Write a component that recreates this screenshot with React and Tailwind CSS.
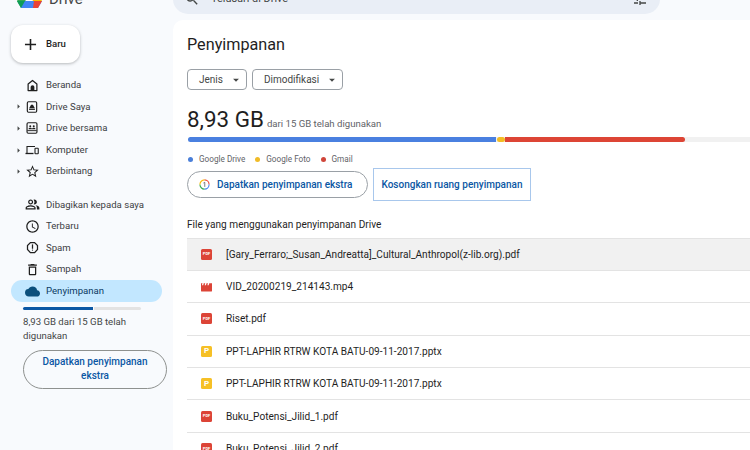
import React from "react";
import { MdAdd, MdSearch, MdTune, MdArrowDropDown, MdArrowRight, MdStarBorder, MdOutlinePeopleAlt, MdAccessTime, MdOutlineReportGmailerrorred, MdOutlineDelete, MdCloud } from "react-icons/md";

const Beranda = () => (
  <svg viewBox="0 0 24 24" className="w-[15px] h-[15px]" fill="none">
    <path d="M12 4L5 9.5V20h14V9.5L12 4z" stroke="#1f1f1f" strokeWidth="2" strokeLinejoin="round" />
    <path d="M9 20v-5.5a3 3 0 0 1 6 0V20H9z" fill="#1f1f1f" />
  </svg>
);
const DriveSaya = () => (
  <svg viewBox="0 0 24 24" className="w-[14px] h-[14px]" fill="none">
    <rect x="4" y="3" width="16" height="18" rx="2" stroke="#1f1f1f" strokeWidth="2" />
    <path d="M7 14l3.4-6h3.2l3.4 6H7z" fill="#1f1f1f" />
    <path d="M7 16h10" stroke="#1f1f1f" strokeWidth="2" />
  </svg>
);
const DriveBersama = () => (
  <svg viewBox="0 0 24 24" className="w-[14px] h-[14px]" fill="none">
    <rect x="3.5" y="3" width="17" height="18" rx="2" stroke="#1f1f1f" strokeWidth="2" />
    <circle cx="9" cy="9" r="1.7" fill="#1f1f1f" />
    <circle cx="15" cy="9" r="1.7" fill="#1f1f1f" />
    <path d="M6 14c0-2 1.5-2.6 3-2.6s3 .6 3 2.6c0-2 1.5-2.6 3-2.6s3 .6 3 2.6H6z" fill="#1f1f1f" />
    <path d="M4 16.5h16" stroke="#1f1f1f" strokeWidth="1.6" />
  </svg>
);
const Komputer = () => (
  <svg viewBox="0 0 28 20" className="w-[14px] h-[12px]" fill="none">
    <path d="M4 16V3h16" stroke="#1f1f1f" strokeWidth="2.2" />
    <path d="M1 17h16" stroke="#1f1f1f" strokeWidth="2.6" />
    <rect x="20" y="6.5" width="6.5" height="11" rx="1.2" stroke="#1f1f1f" strokeWidth="2.2" />
  </svg>
);

const cls = "text-[#1f1f1f] text-[15px]";
const NavItem = ({ icon, label, caret, active }) => (
  <div className={`flex items-center h-[21.6px] w-[151px] rounded-full ${active ? "bg-[#c2e7ff]" : ""}`}>
    <div className="w-[12px] flex justify-end">
      {caret && <MdArrowRight className="text-[#444746] text-[11px] shrink-0 -mr-[0.5px]" />}
    </div>
    <div className="w-[18px] flex justify-center">{icon}</div>
    <span className={`ml-[5px] text-[9.6px] ${active ? "text-[#0b3a63]" : "text-[#3c4043]"}`}>{label}</span>
  </div>
);

const PdfIcon = () => (
  <div className="w-[11px] h-[11px] rounded-[1.5px] bg-[#dc4437] flex items-center justify-center">
    <span className="text-white text-[4px] font-bold leading-none">PDF</span>
  </div>
);
const VideoIcon = () => (
  <svg viewBox="0 0 12 10" className="w-[11px] h-[10px]">
    <path d="M0 1h1.6L1 3h1.4L3 1h1.6L4 3h1.4L6 1h1.6L7 3h1.4L9 1h3v8a1 1 0 0 1-1 1H1a1 1 0 0 1-1-1V1z" fill="#dc4437" />
  </svg>
);
const PptIcon = () => (
  <div className="w-[11px] h-[11px] rounded-[1.5px] bg-[#f6c026] flex items-center justify-center">
    <span className="text-white text-[8px] font-bold leading-none">P</span>
  </div>
);

const files = [
  [<PdfIcon />, "[Gary_Ferraro;_Susan_Andreatta]_Cultural_Anthropol(z-lib.org).pdf", true],
  [<VideoIcon />, "VID_20200219_214143.mp4"],
  [<PdfIcon />, "Riset.pdf"],
  [<PptIcon />, "PPT-LAPHIR RTRW KOTA BATU-09-11-2017.pptx"],
  [<PptIcon />, "PPT-LAPHIR RTRW KOTA BATU-09-11-2017.pptx"],
  [<PdfIcon />, "Buku_Potensi_Jilid_1.pdf"],
  [<PdfIcon />, "Buku_Potensi_Jilid_2.pdf"],
];

const Legend = ({ color, label }) => (
  <div className="flex items-center">
    <span className={`w-[5px] h-[5px] rounded-full ${color}`} />
    <span className="ml-[6px] text-[8.2px] text-[#5f6368]">{label}</span>
  </div>
);

export default function App() {
  return (
    <div className="w-[750px] h-[450px] overflow-hidden bg-[#f8fafd] flex font-['Roboto',sans-serif]">
      <aside className="w-[174px] shrink-0 flex flex-col">
        <div className="h-[25px] overflow-hidden pl-[17px] flex">
          <svg viewBox="0 0 25 22" className="w-[25px] h-[22px] -mt-[13px] shrink-0">
            <path d="M8 0h9l8 14H16z" fill="#fbbc04" />
            <path d="M8 0L0 14l4 7 8.5-14z" fill="#34a853" />
            <path d="M0 14h8l4.5 0-4 7H4z" fill="#0f9d58" />
            <path d="M4 21h17l4-7H8z" fill="#4285f4" />
            <path d="M21 21l4-7h-8l-1 7z" fill="#ea4335" />
          </svg>
          <span className="ml-[7px] text-[15px] leading-[20px] -mt-[11px] text-[#444746]">Drive</span>
        </div>
        <div className="ml-[11px] w-[69px] h-[38px] bg-white rounded-[12px] shadow-[0_1px_3px_rgba(60,64,67,0.35)] flex items-center pl-[10px]">
          <MdAdd className="text-[#1f1f1f] text-[19px]" />
          <span className="ml-[6px] text-[9.6px] font-medium text-[#1f1f1f]">Baru</span>
        </div>
        <nav className="mt-[11.5px] ml-[11px] flex flex-col">
          <NavItem icon={<Beranda />} label="Beranda" />
          <NavItem caret icon={<DriveSaya />} label="Drive Saya" />
          <NavItem caret icon={<DriveBersama />} label="Drive bersama" />
          <NavItem caret icon={<Komputer />} label="Komputer" />
          <NavItem caret icon={<MdStarBorder className={cls} />} label="Berbintang" />
        </nav>
        <nav className="mt-[11.5px] ml-[11px] flex flex-col">
          <NavItem icon={<MdOutlinePeopleAlt className={cls} />} label="Dibagikan kepada saya" />
          <NavItem icon={<MdAccessTime className={cls} />} label="Terbaru" />
          <NavItem icon={<MdOutlineReportGmailerrorred className={cls} />} label="Spam" />
          <NavItem icon={<MdOutlineDelete className={cls} />} label="Sampah" />
          <NavItem active icon={<MdCloud className="text-[#0b4f7c] text-[15px]" />} label="Penyimpanan" />
        </nav>
        <div className="mt-[5px] ml-[23px] w-[118px] h-[3px] flex gap-[1px]">
          <div className="w-[70px] bg-[#0b57a4] rounded-l-full" />
          <div className="flex-1 bg-[#e3e3e3] rounded-r-full" />
        </div>
        <p className="mt-[5px] ml-[23px] w-[125px] text-[9.6px] leading-[14px] text-[#444746]">8,93 GB dari 15 GB telah digunakan</p>
        <button className="mt-[7px] ml-[23px] w-[144px] h-[39px] rounded-full border border-[#8e918f] text-[#0b57a4] text-[10px] font-medium leading-[14px] px-[14px]">
          Dapatkan penyimpanan ekstra
        </button>
      </aside>

      <div className="flex-1 flex flex-col min-w-0 -ml-[1px]">
        <header className="h-[20px] shrink-0 overflow-hidden">
          <div className="w-[487px] h-[30px] -mt-[16px] rounded-full bg-[#e9eef6] flex items-center pl-[11px] pr-[12px] text-[#444746]">
            <MdSearch className="text-[16px] shrink-0" />
            <span className="ml-[11px] text-[10.9px]">Telusuri di Drive</span>
            <MdTune className="ml-auto text-[16px] shrink-0" />
          </div>
        </header>
        <main className="flex-1 bg-white rounded-tl-[10px] pl-[14px] flex flex-col overflow-hidden">
          <h1 className="mt-[13px] text-[16.2px] leading-[24px] text-[#1f1f1f]">Penyimpanan</h1>
          <div className="mt-[12px] flex gap-[5px]">
            <div className="w-[60px] h-[21px] rounded-[4px] border border-[#9aa0a6] flex items-center pl-[11px] text-[10px] text-[#444746]">
              Jenis<MdArrowDropDown className="ml-[6px] text-[14px]" />
            </div>
            <div className="w-[91px] h-[21px] rounded-[4px] border border-[#9aa0a6] flex items-center pl-[11px] text-[10px] text-[#444746]">
              Dimodifikasi<MdArrowDropDown className="ml-[6px] text-[14px]" />
            </div>
          </div>
          <div className="mt-[14px] flex items-baseline h-[30px]">
            <span className="text-[22.4px] leading-[30px] text-[#1f1f1f]">8,93 GB</span>
            <span className="ml-[3px] text-[9.6px] text-[#5f6368]">dari 15 GB telah digunakan</span>
          </div>
          <div className="mt-[3px] ml-[1px] h-[5px] bg-[#f1f1f1] flex rounded-l-full shrink-0">
            <div className="w-[308px] bg-[#4a80e0] rounded-l-full" />
            <div className="ml-[1px] w-[8px] bg-[#f4bd24] rounded-full" />
            <div className="w-[180px] bg-[#dd4535] rounded-r-full" />
          </div>
          <div className="mt-[12px] h-[10px] flex items-center gap-[10px] ml-[1px]">
            <Legend color="bg-[#4a7fd9]" label="Google Drive" />
            <Legend color="bg-[#f0bb27]" label="Google Foto" />
            <Legend color="bg-[#d0453a]" label="Gmail" />
          </div>
          <div className="mt-[4px] flex items-center gap-[5px]">
            <div className="w-[181px] h-[27px] rounded-full border border-[#9aa0a6] flex items-center pl-[11px]">
              <svg viewBox="0 0 12 12" className="w-[11px] h-[11px]" fill="none">
                <path d="M6 1a5 5 0 0 1 5 5" stroke="#ea4335" strokeWidth="1.2" />
                <path d="M11 6a5 5 0 0 1-5 5" stroke="#4285f4" strokeWidth="1.2" />
                <path d="M6 11a5 5 0 0 1-5-5" stroke="#34a853" strokeWidth="1.2" />
                <path d="M1 6a5 5 0 0 1 5-5" stroke="#fbbc04" strokeWidth="1.2" />
                <path d="M4.8 4.4L6.3 3.6V8.6" stroke="#5f6368" strokeWidth="0.9" />
              </svg>
              <span className="ml-[7px] text-[10px] font-medium text-[#0b57a4]">Dapatkan penyimpanan ekstra</span>
            </div>
            <div className="w-[158px] h-[33px] border border-[#a8c7ec] flex items-center justify-center text-[10px] font-medium text-[#0b57a4]">
              Kosongkan ruang penyimpanan
            </div>
          </div>
          <p className="mt-[17px] text-[10.1px] leading-[14px] text-[#1f1f1f]">File yang menggunakan penyimpanan Drive</p>
          <div className="mt-[5.5px] flex flex-col">
            {files.map(([icon, name, sel], i) => (
              <div key={i} className={`shrink-0 h-[32.4px] border-t border-[#e3e3e3] flex items-center ${sel ? "bg-[#f1f1f1]" : ""}`}>
                <div className="w-[39px] flex justify-center">{icon}</div>
                <span className="text-[10.1px] text-[#1f1f1f]">{name}</span>
              </div>
            ))}
          </div>
        </main>
      </div>
    </div>
  );
}
